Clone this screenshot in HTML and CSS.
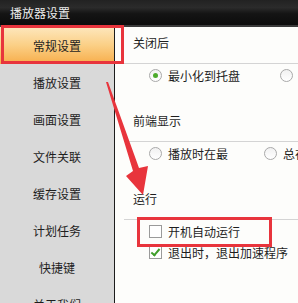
FILE: index.html
```html
<!DOCTYPE html>
<html lang="zh-CN">
<head>
<meta charset="UTF-8">
<title>播放器设置</title>
<link rel="stylesheet" href="styles.css">
</head>
<body>

<div class="window">
  <div class="titlebar">播放器设置</div>
  <div class="main">
    <ul class="sidebar">
      <li class="active">常规设置</li>
      <li>播放设置</li>
      <li>画面设置</li>
      <li>文件关联</li>
      <li>缓存设置</li>
      <li>计划任务</li>
      <li>快捷键</li>
      <li>关于我们</li>
    </ul>

    <div class="content">
      <div class="section">
        <div class="section-title">关闭后</div>
        <div class="row">
          <label class="opt opt-tray"><span class="radio checked"></span>最小化到托盘</label>
          <label class="opt"><span class="radio"></span>退出程序</label>
        </div>
      </div>

      <div class="section">
        <div class="section-title">前端显示</div>
        <div class="row">
          <label class="opt opt-top"><span class="radio"></span>播放时在最</label>
          <label class="opt"><span class="radio"></span>总在最前</label>
        </div>
      </div>

      <div class="section">
        <div class="section-title">运行</div>
        <div class="row">
          <label class="opt"><span class="check"></span>开机自动运行</label>
        </div>
        <div class="row row-tight">
          <label class="opt"><span class="check checked"></span>退出时，退出加速程序</label>
        </div>
      </div>
    </div>
  </div>

  <!-- annotations -->
  <div class="mark mark-nav"></div>
  <div class="mark mark-boot"></div>
  <svg class="arrow" width="298" height="303" viewBox="0 0 298 303">
    <polygon points="106,82 108,82 139,168 148,166 143,195 126,176 133,171" fill="#e8343c"/>
  </svg>
</div>

</body>
</html>
```

FILE: styles.css
```css
/* General styles */
body {
  margin: 0;
  padding: 0;
  font-family: "Noto Sans CJK SC", "DejaVu Sans", sans-serif;
  font-size: 12px;
  color: #1e1e1e;
  background-color: #fdfdfb;
}

.window {
  position: relative;
  width: 298px;
  height: 303px;
  overflow: hidden;
}

.titlebar {
  height: 25px;
  padding-left: 10px;
  line-height: 26px;
  font-size: 12px;
  color: #ececec;
  background: linear-gradient(#222 0%, #2b2b2b 30%, #141414 55%, #0c0c0c 100%);
  border-bottom: 2px solid #3a3a3a;
}

.main {
  display: flex;
  height: 276px;
}

/* Sidebar */
.sidebar {
  list-style: none;
  margin: 0;
  padding: 0;
  width: 114px;
  flex-shrink: 0;
  background-color: #d9d9d9;
  border-right: 1px solid #1c1c1c;
}

.sidebar li {
  height: 37px;
  line-height: 37px;
  text-align: center;
}

.sidebar li.active {
  background: linear-gradient(#fde7bd 0%, #fbcf85 50%, #f7ad4a 100%);
}

/* Content */
.content {
  flex: 1;
  padding-left: 9px;
  background-color: #fdfdfb;
}

.section {
  padding-bottom: 19px;
}

.section-title {
  padding: 8px 0 12px 9px;
  line-height: 16px;
  border-bottom: 1px solid #d4d4d4;
}

.row {
  display: flex;
  align-items: center;
  height: 22px;
  padding-left: 25px;
  white-space: nowrap;
}

.row-tight {
  height: 20px;
}

.opt {
  display: flex;
  align-items: center;
  flex-shrink: 0;
}

.opt-tray {
  width: 131px;
}

.opt-top {
  width: 115px;
}

.radio,
.check {
  width: 11px;
  height: 11px;
  margin-right: 6px;
  border: 1px solid #a9a9a9;
  background: linear-gradient(#f1f1f1, #ffffff);
  position: relative;
  flex-shrink: 0;
}

.radio {
  border-radius: 50%;
}

.radio.checked::after {
  content: "";
  position: absolute;
  left: 3px;
  top: 3px;
  width: 5px;
  height: 5px;
  border-radius: 50%;
  background-color: #4caa2c;
}

.check {
  border-color: #9a9a9a;
  background: #fff;
}

.check.checked::after {
  content: "";
  position: absolute;
  left: 3px;
  top: 0;
  width: 3px;
  height: 7px;
  border: solid #3f9e2a;
  border-width: 0 2px 2px 0;
  transform: rotate(40deg);
}

/* Annotations */
.mark {
  position: absolute;
  border: 3px solid #e8343c;
}

.mark-nav {
  left: 1px;
  top: 25px;
  width: 117px;
  height: 33px;
}

.mark-boot {
  left: 137px;
  top: 217px;
  width: 129px;
  height: 24px;
}

.arrow {
  position: absolute;
  left: 0;
  top: 0;
}
```
